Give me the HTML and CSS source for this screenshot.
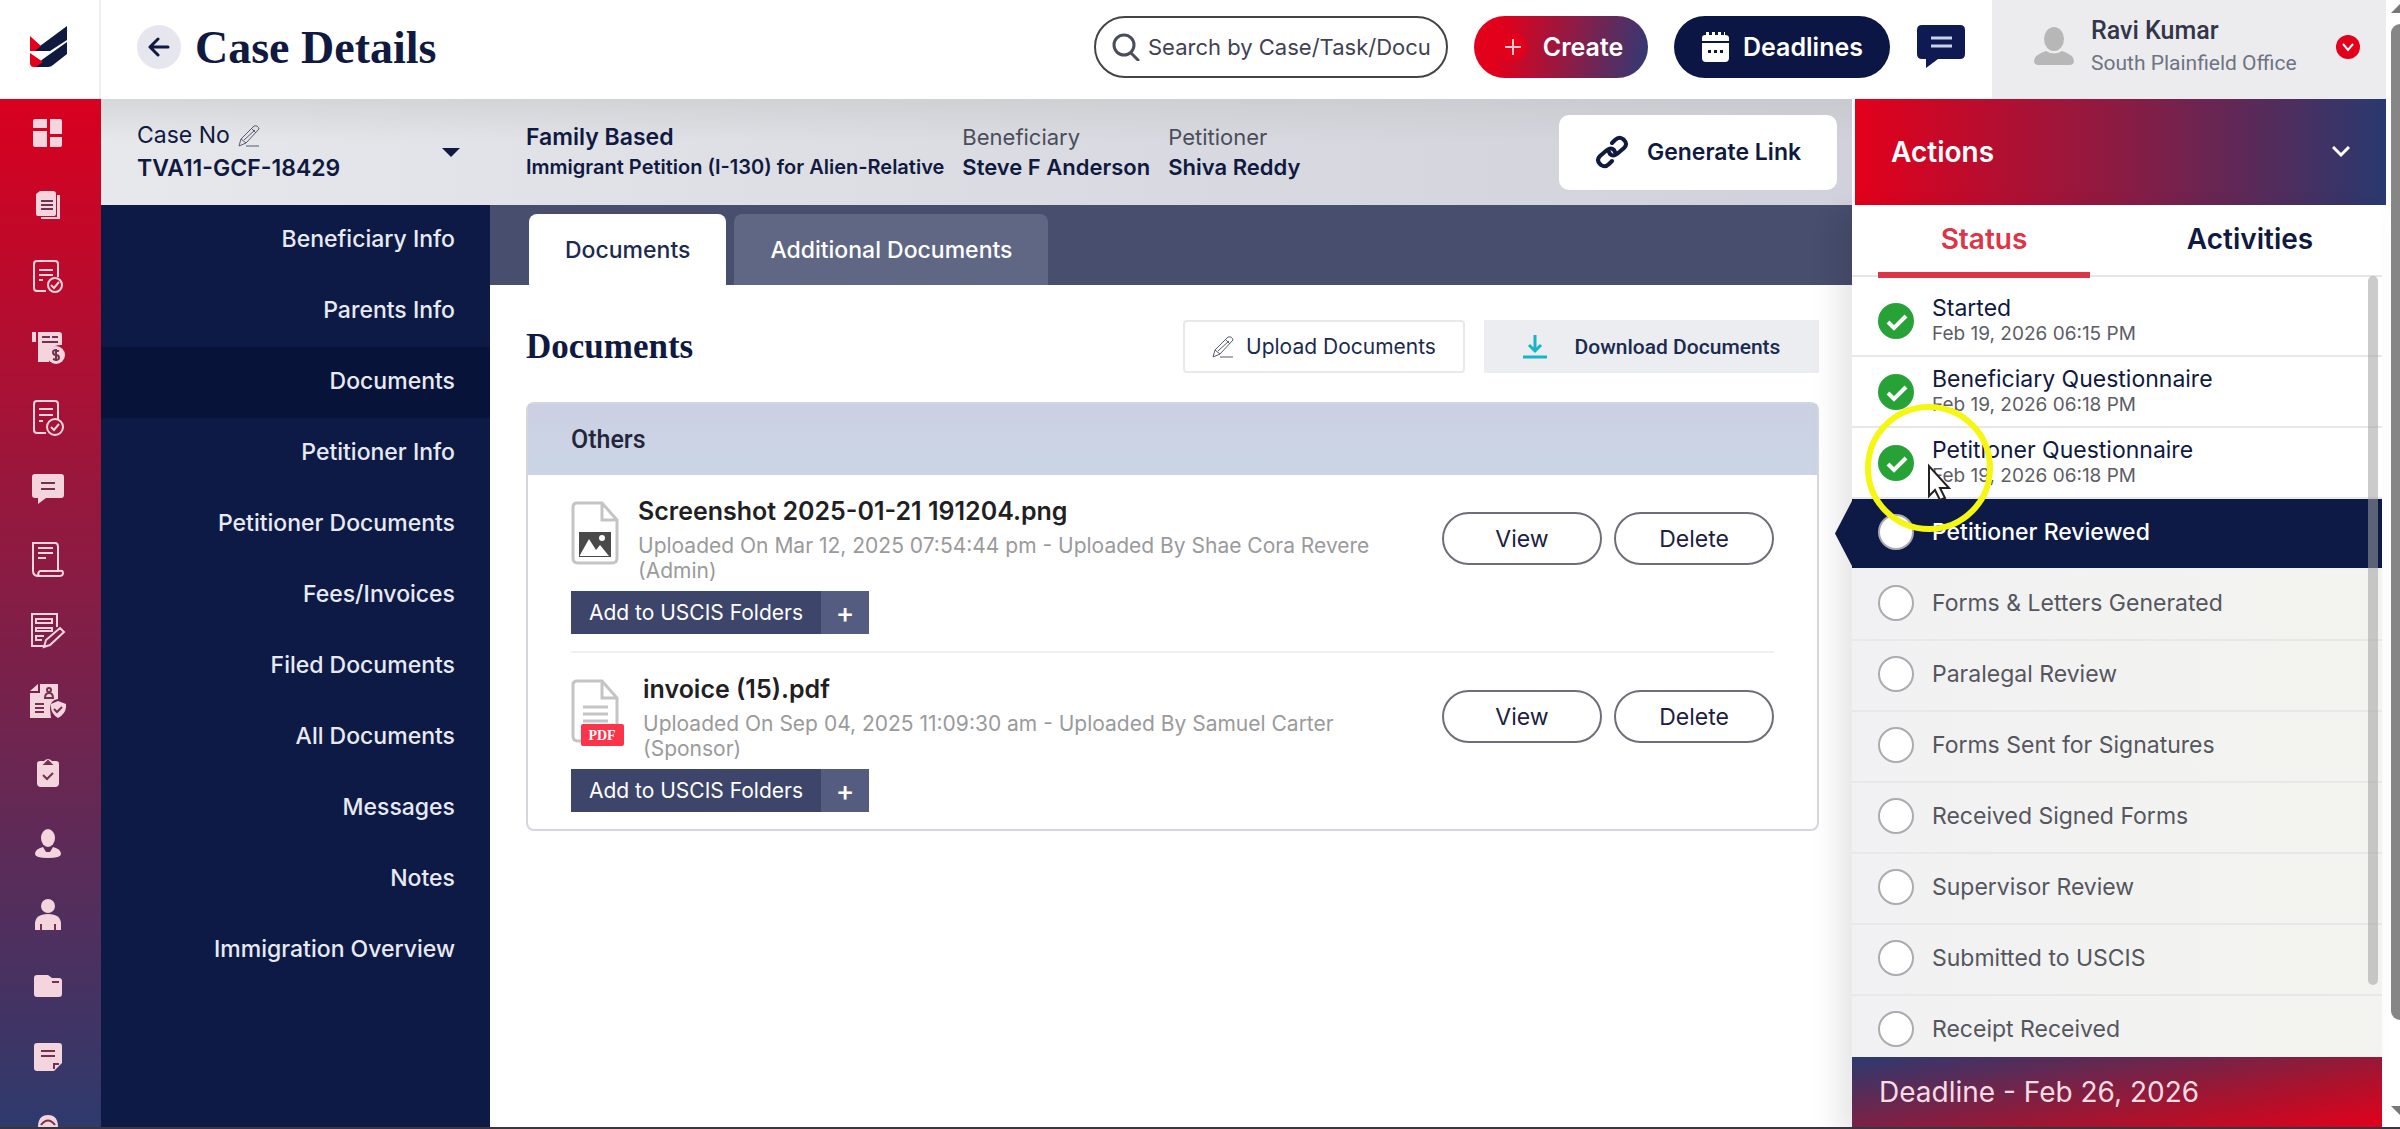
FILE: index.html
```html
<!DOCTYPE html>
<html lang="en">
<head>
    <meta charset="utf-8">
    <title>Case Details</title>
    <link rel="stylesheet" href="styles.css">
</head>
<body>
    <div class="app">
        <!-- top bar -->
        <header class="topbar">
            <a class="logo" href="#" aria-label="Home">
                <svg width="38" height="42" viewBox="0 0 38 42">
                    <path fill="#10193f" d="M10 20L37 0v14L20 25H3zM13 33L37 16v12L23 39q-2 2-5 2H4z"/>
                    <path fill="#e3001b" d="M0 10l11 10-6 5H0zM0 27l13 9-7 5H4q-4 0-4-4z"/>
                </svg>
            </a>
            <button class="back" aria-label="Back">
                <svg width="22" height="20" viewBox="0 0 22 20" fill="none" stroke="#10193f" stroke-width="3" stroke-linecap="round" stroke-linejoin="round"><path d="M20 10H2M10 2l-8 8 8 8"/></svg>
            </button>
            <h1>Case Details</h1>
            <label class="search">
                <svg width="28" height="28" viewBox="0 0 28 28" fill="none" stroke="#4a4d5c" stroke-width="3" stroke-linecap="round"><circle cx="12" cy="12" r="10"/><path d="M19 20l7 7"/></svg>
                <input type="text" aria-label="Search" placeholder="Search by Case/Task/Document">
            </label>
            <button class="pill create">
                <svg width="28" height="28" viewBox="0 0 28 28"><circle cx="14" cy="14" r="14" fill="#e3001b"/><path d="M14 6v16M6 14h16" stroke="#ffc9cf" stroke-width="2"/></svg>
                Create
            </button>
            <button class="pill deadlines">
                <svg width="28" height="30" viewBox="0 0 28 30" fill="#fff"><path d="M1 9V6q0-3 3-3h1V0h3v3h3V0h3v3h3V0h3v3h3V0h1v3q4 0 4 3v3z"/><path fill-rule="evenodd" d="M1 11h27v15q0 4-4 4H5q-4 0-4-4zm6 7v3h3v-3zm6 0v3h3v-3zm6 0v3h3v-3z"/></svg>
                Deadlines
            </button>
            <button class="chat" aria-label="Messages">
                <svg width="48" height="44" viewBox="0 0 48 44"><path fill="#0f1a52" d="M5 0h38q5 0 5 5v24q0 5-5 5H21L9 43v-9H5q-5 0-5-5V5q0-5 5-5z"/><path stroke="#c9d4ec" stroke-width="3" d="M14 13h21M14 21h21"/></svg>
            </button>
            <div class="user">
                <svg class="avatar" width="40" height="40" viewBox="0 0 40 40" fill="#b7b7b7"><ellipse cx="20" cy="12" rx="10" ry="12"/><path d="M0 34q0-6 12-10 8 5 16 0 12 4 12 10 0 4-5 4H5q-5 0-5-4z"/></svg>
                <div class="who">
                    <strong>Ravi Kumar</strong>
                    <span>South Plainfield Office</span>
                </div>
                <button class="user-more" aria-label="Account menu">
                    <svg width="24" height="24" viewBox="0 0 24 24"><circle cx="12" cy="12" r="12" fill="#e3001b"/><path d="M7 9l5 6 5-6" fill="none" stroke="#fff" stroke-width="2"/></svg>
                </button>
            </div>
        </header>

        <div class="body">
            <!-- icon rail -->
            <nav class="rail" aria-label="Main">
                <a href="#" aria-label="Dashboard"><svg width="32" height="32" viewBox="0 0 32 32" fill="currentColor"><path d="M3 1h12v9H1V3q0-2 2-2zM18 1h10q2 0 2 2v13H18zM1 13h14v16H3q-2 0-2-2zM18 19h12v8q0 2-2 2H18z"/></svg></a>
                <a href="#" aria-label="Cases"><svg width="32" height="32" viewBox="0 0 32 32"><path fill="currentColor" d="M4 9V5l4-3h13q3 0 3 3v20q0 2-2 2H6q-2 0-2-2zM25 6h3v24H9v-2h16z"/><path class="cut" d="M9 12h12M9 16h12M9 20h12"/></svg></a>
                <a href="#" aria-label="Approvals"><svg width="32" height="36" viewBox="0 0 32 36" fill="none" stroke="currentColor" stroke-width="2"><path d="M14 33H5q-3 0-3-3V6q0-3 3-3h18q3 0 3 3v13M7 12h14M7 17h14M7 22h4"/><circle cx="23" cy="27" r="7"/><path d="M19 27l3 3 5-6"/></svg></a>
                <a href="#" aria-label="Billing"><svg width="34" height="34" viewBox="0 0 34 34"><path fill="currentColor" d="M1 2h4v10H1zM7 2h21q3 0 3 3v10q-14-1-13 17H7z"/><circle cx="25" cy="25" r="9" fill="currentColor"/><path class="cut" d="M11 7h8M21 7h6M11 12h16"/><path class="cut" d="M28 21q-6-2-6 1t3 3 3 3-6 1M25 19v12"/></svg></a>
                <a href="#" aria-label="Tasks"><svg width="32" height="36" viewBox="0 0 32 36" fill="none" stroke="currentColor" stroke-width="2"><path d="M14 33H5q-3 0-3-3V4q0-3 3-3h18q3 0 3 3v15M7 9h14M7 15h14M7 21h4"/><circle cx="23" cy="27" r="8"/><path d="M19 27l3 3 5-6"/></svg></a>
                <a href="#" aria-label="Chat"><svg width="32" height="30" viewBox="0 0 32 30"><path fill="currentColor" d="M3 0h26q3 0 3 3v18q0 3-3 3H14l-8 6v-6H3q-3 0-3-3V3q0-3 3-3z"/><path class="cut" d="M9 9h14M9 15h14"/></svg></a>
                <a href="#" aria-label="Forms"><svg width="32" height="36" viewBox="0 0 32 36" fill="none" stroke="currentColor" stroke-width="2"><path d="M7 34q-6 0-6-5V1h22q3 0 3 4v23M7 34h20q4 0 4-3t-4-2H8q-3 2-1 5zM6 6h15M6 11h15M6 16h8"/></svg></a>
                <a href="#" aria-label="Edit forms"><svg width="36" height="36" viewBox="0 0 36 36" fill="none" stroke="currentColor" stroke-width="2"><path d="M14 33H2V1h25v13M6 6h16v4H6zM6 15h16v3H6zM14 23H6v4h6M14 34l2-7 14-12 4 4-14 13z"/></svg></a>
                <a href="#" aria-label="Secure records"><svg width="36" height="36" viewBox="0 0 36 36"><path fill="currentColor" d="M10 0h18v15q-8 1-8 10l1 9H0V9h10z"/><path fill="currentColor" d="M0 7l8-7v7zM28 17l8 3q1 9-8 14-8-5-7-14z"/><path class="cut" d="M5 20h9M5 24h9M5 28h9M24 25l3 3 5-5M15 14q0-5 4-5t4 5z"/><circle class="cut" cx="19" cy="6" r="2"/></svg></a>
                <a href="#" aria-label="Checklist"><svg width="24" height="28" viewBox="0 0 24 28"><path fill="currentColor" d="M4 2h4q4-4 8 0h4q3 0 3 3v19q0 4-4 4H5q-4 0-4-4V5q0-3 3-3z"/><path class="cut" d="M9 5h6l-3-3zM7 16l4 4 6-6"/></svg></a>
                <a href="#" aria-label="Attorneys"><svg width="28" height="30" viewBox="0 0 28 30" fill="currentColor"><ellipse cx="14" cy="9" rx="7" ry="9"/><path d="M9 18l3 5h4l3-5q8 2 8 7 0 4-13 4T1 25q0-5 8-7z"/></svg></a>
                <a href="#" aria-label="Clients"><svg width="28" height="32" viewBox="0 0 28 32"><circle cx="14" cy="7" r="7" fill="currentColor"/><path fill="currentColor" d="M1 31v-6q0-10 13-10t13 10v6z"/><path class="cut" d="M7 32v-7M21 32v-7"/></svg></a>
                <a href="#" aria-label="Folders"><svg width="28" height="24" viewBox="0 0 28 24"><path fill="currentColor" d="M3 1h11l4 3h7q3 0 3 3v13q0 3-3 3H3q-3 0-3-3V4q0-3 3-3z"/><path class="cut" d="M18 8h7"/></svg></a>
                <a href="#" aria-label="Notes"><svg width="28" height="28" viewBox="0 0 28 28"><path fill="currentColor" d="M3 0h22q3 0 3 3v17l-8 8H3q-3 0-3-3V3q0-3 3-3z"/><path class="cut" d="M7 8h14M7 13h14M20 26v-5h5"/></svg></a>
                <a href="#" aria-label="Support"><svg width="22" height="28" viewBox="0 0 22 28"><path fill="currentColor" d="M1 28V13Q1 1 11 1t10 12v15z"/><path class="cut" d="M4 11q7-9 14 0"/></svg></a>
            </nav>

            <div class="work">
                <!-- case summary -->
                <section class="casebar">
                    <div class="case-pick">
                        <label for="case">Case No
                            <svg width="22" height="22" viewBox="0 0 22 22" fill="none" stroke="#555b70" stroke-width="1"><path d="M1 21l2-7L16 1q4-1 5 3L8 18zM3 14l5 4M14 4l4 4M6 15L17 5M8 21h13"/></svg>
                        </label>
                        <select id="case"><option>TVA11-GCF-18429</option></select>
                        <svg class="caret" width="18" height="9" viewBox="0 0 18 9"><path fill="#10193f" d="M0 0h18L9 9z"/></svg>
                    </div>
                    <dl class="facts">
                        <div class="kind"><dt>Family Based</dt><dd>Immigrant Petition (I-130) for Alien-Relative</dd></div>
                        <div><dt>Beneficiary</dt><dd>Steve F Anderson</dd></div>
                        <div><dt>Petitioner</dt><dd>Shiva Reddy</dd></div>
                    </dl>
                    <button class="generate">
                        <svg width="34" height="34" viewBox="0 0 34 34" fill="none" stroke="#10193f" stroke-width="4" stroke-linecap="round"><path d="M17 8l3-3q4-4 8-1l1 1q4 4 0 8l-7 6q-4 3-7 0l-1-2"/><path d="M17 26l-3 3q-4 4-8 1l-1-1q-4-4 0-8l7-6q4-3 7 0l1 2"/></svg>
                        Generate Link
                    </button>
                </section>

                <div class="columns">
                    <nav class="menu" aria-label="Case">
                        <a href="#">Beneficiary Info</a>
                        <a href="#">Parents Info</a>
                        <a class="active" href="#">Documents</a>
                        <a href="#">Petitioner Info</a>
                        <a href="#">Petitioner Documents</a>
                        <a href="#">Fees/Invoices</a>
                        <a href="#">Filed Documents</a>
                        <a href="#">All Documents</a>
                        <a href="#">Messages</a>
                        <a href="#">Notes</a>
                        <a href="#">Immigration Overview</a>
                    </nav>

                    <main class="content">
                        <div class="tabs">
                            <button class="tab active">Documents</button>
                            <button class="tab">Additional Documents</button>
                        </div>
                        <div class="docs">
                            <div class="docs-head">
                                <h2>Documents</h2>
                                <button class="upload">
                                    <svg width="22" height="22" viewBox="0 0 22 22" fill="none" stroke="#555b70" stroke-width="1"><path d="M1 21l2-7L16 1q4-1 5 3L8 18zM3 14l5 4M14 4l4 4M6 15L17 5M8 21h13"/></svg>
                                    Upload Documents
                                </button>
                                <button class="download">
                                    <svg width="24" height="24" viewBox="0 0 24 24" fill="none" stroke="#16b5c8" stroke-width="3"><path d="M12 0v15M6 10l6 6 6-6M0 22h24"/></svg>
                                    Download Documents
                                </button>
                            </div>
                            <section class="card">
                                <h3>Others</h3>
                                <article class="file">
                                    <div class="file-info">
                                        <svg class="file-icon" width="48" height="64" viewBox="0 0 48 64"><path fill="#fff" stroke="#c4c4c4" stroke-width="3" d="M6 2h25l15 17v38q0 5-5 5H7q-5 0-5-5V6q0-4 4-4zM31 2v17h15"/><path fill="#4a4a4a" d="M8 31h32v25H8z"/><path fill="#fff" d="M9 54l9-16 7 11 4-5 9 11H9z"/><circle cx="31" cy="37" r="3" fill="#fff"/></svg>
                                        <div class="file-text">
                                            <h4>Screenshot 2025-01-21 191204.png</h4>
                                            <p>Uploaded On Mar 12, 2025 07:54:44 pm - Uploaded By Shae Cora Revere (Admin)</p>
                                        </div>
                                    </div>
                                    <div class="file-actions">
                                        <button>View</button>
                                        <button>Delete</button>
                                    </div>
                                    <button class="add"><span>Add to USCIS Folders</span><b>+</b></button>
                                </article>
                                <article class="file">
                                    <div class="file-info">
                                        <svg class="file-icon" width="53" height="67" viewBox="0 0 53 67"><path fill="#fff" stroke="#c4c4c4" stroke-width="3" d="M6 2h25l15 17v38q0 5-5 5H7q-5 0-5-5V6q0-4 4-4zM31 2v17h15"/><path stroke="#c4c4c4" stroke-width="3" d="M12 28h25M12 35h25M12 42h25"/><rect x="10" y="45" width="43" height="22" rx="2" fill="#fb3449"/><text class="pdf" x="31" y="61" text-anchor="middle">PDF</text></svg>
                                        <div class="file-text">
                                            <h4>invoice (15).pdf</h4>
                                            <p>Uploaded On Sep 04, 2025 11:09:30 am - Uploaded By Samuel Carter (Sponsor)</p>
                                        </div>
                                    </div>
                                    <div class="file-actions">
                                        <button>View</button>
                                        <button>Delete</button>
                                    </div>
                                    <button class="add"><span>Add to USCIS Folders</span><b>+</b></button>
                                </article>
                            </section>
                        </div>
                    </main>
                </div>
            </div>

            <!-- status panel -->
            <aside class="panel">
                <button class="actions">
                    Actions
                    <svg width="18" height="12" viewBox="0 0 18 12" fill="none" stroke="#fff" stroke-width="3"><path d="M1 1l8 8 8-8"/></svg>
                </button>
                <div class="panel-body">
                    <div class="panel-tabs">
                        <button class="active">Status</button>
                        <button>Activities</button>
                    </div>
                    <ol class="steps">
                        <li class="done"><svg class="dot" viewBox="0 0 36 36"><circle cx="18" cy="18" r="18" fill="#27a236"/><path d="M10 19l6 6 12-12" fill="none" stroke="#fff" stroke-width="4"/></svg><div>Started<time>Feb 19, 2026 06:15 PM</time></div></li>
                        <li class="done"><svg class="dot" viewBox="0 0 36 36"><circle cx="18" cy="18" r="18" fill="#27a236"/><path d="M10 19l6 6 12-12" fill="none" stroke="#fff" stroke-width="4"/></svg><div>Beneficiary Questionnaire<time>Feb 19, 2026 06:18 PM</time></div></li>
                        <li class="done"><svg class="dot" viewBox="0 0 36 36"><circle cx="18" cy="18" r="18" fill="#27a236"/><path d="M10 19l6 6 12-12" fill="none" stroke="#fff" stroke-width="4"/></svg><div>Petitioner Questionnaire<time>Feb 19, 2026 06:18 PM</time></div></li>
                        <li class="current"><i class="dot"></i><div>Petitioner Reviewed</div></li>
                        <li><i class="dot"></i><div>Forms &amp; Letters Generated</div></li>
                        <li><i class="dot"></i><div>Paralegal Review</div></li>
                        <li><i class="dot"></i><div>Forms Sent for Signatures</div></li>
                        <li><i class="dot"></i><div>Received Signed Forms</div></li>
                        <li><i class="dot"></i><div>Supervisor Review</div></li>
                        <li><i class="dot"></i><div>Submitted to USCIS</div></li>
                        <li><i class="dot"></i><div>Receipt Received</div></li>
                    </ol>
                    <div class="due">Deadline - Feb 26, 2026</div>
                    <div class="thumb"></div>
                    <svg class="pointer" width="128" height="128" viewBox="0 0 128 128"><circle cx="64" cy="64" r="61" fill="none" stroke="#f6f613" stroke-width="6"/><path fill="#fff" stroke="#222" stroke-width="2" d="M64 62v30l6-6 5 10 5-2-5-10h9z"/></svg>
                </div>
            </aside>
        </div>
    </div>
    <div class="scroll">
        <svg width="18" height="9" viewBox="0 0 18 9"><path fill="#777" d="M0 9h18L9 0z"/></svg>
        <div class="scroll-track"><div class="scroll-thumb"></div></div>
        <svg width="18" height="9" viewBox="0 0 18 9"><path fill="#777" d="M0 0h18L9 9z"/></svg>
    </div>
</body>
</html>
```
FILE: styles.css
```css
* {
    box-sizing: border-box;
}
body {
    margin: 0;
    height: 100vh;
    display: flex;
    overflow: hidden;
    background: #fff;
    color: #10193f;
    font-family: Inter, "Liberation Sans", sans-serif;
    font-size: 23px;
    border-bottom: 2px solid #3a3340;
}
button, input, select {
    font: inherit;
    color: inherit;
    border: 0;
    padding: 0;
    background: none;
}
a {
    color: inherit;
    text-decoration: none;
}
svg {
    display: block;
    flex: none;
}
h1, h2, h3, h4, p, dl, dd, ol {
    margin: 0;
    padding: 0;
}
.app {
    flex: 1;
    min-width: 0;
    display: flex;
    flex-direction: column;
}

/* top bar */
.topbar {
    flex: none;
    height: 99px;
    display: flex;
    align-items: center;
    padding-bottom: 5px;
}
.logo {
    width: 101px;
    height: 99px;
    margin-bottom: -5px;
    padding: 0 0 5px 30px;
    display: flex;
    align-items: center;
    border-right: 2px solid #efeff1;
}
.back {
    width: 44px;
    height: 44px;
    margin: 0 14px 0 36px;
    display: flex;
    align-items: center;
    justify-content: center;
    border-radius: 50%;
    background: #e6e6ee;
}
h1, h2 {
    font-family: "Liberation Serif", serif;
    font-weight: bold;
    flex: 1;
}
h1 {
    font-size: 46px;
}
.search {
    width: 354px;
    height: 62px;
    display: flex;
    align-items: center;
    gap: 8px;
    padding: 0 16px;
    border: 2px solid #444;
    border-radius: 31px;
}
.search input {
    flex: 1;
    min-width: 0;
    font-size: 22px;
    outline: 0;
}
.search input::placeholder {
    color: #3f4252;
    opacity: 1;
}
.pill {
    height: 62px;
    display: flex;
    align-items: center;
    justify-content: center;
    gap: 14px;
    border-radius: 31px;
    color: #fff;
    font-size: 25px;
    font-weight: 600;
}
.create {
    width: 174px;
    margin: 0 26px;
    gap: 16px;
    background: linear-gradient(100deg, #e3001b 15%, #2f3a75);
}
.deadlines {
    width: 216px;
    background: #0c1644;
}
.chat {
    margin: 0 27px;
}
.user {
    width: 394px;
    height: 99px;
    margin-bottom: -5px;
    padding: 0 26px 5px 42px;
    display: flex;
    align-items: center;
    background: #ececee;
}
.who {
    flex: 1;
    margin-left: 17px;
    font-family: Roboto, sans-serif;
    line-height: 32px;
}
.who strong, .who span {
    display: block;
}
.who strong {
    font-size: 25px;
    font-weight: 500;
    color: #33364a;
}
.who span {
    font-size: 21px;
    color: #6f7383;
}

/* icon rail */
.body {
    flex: 1;
    min-height: 0;
    display: flex;
}
.rail {
    width: 101px;
    overflow: hidden;
    background: linear-gradient(#d9001f, #8c1b42 45%, #2f3a6d);
}
.rail a {
    height: 71px;
    padding: 0 5px 2px 0;
    display: flex;
    align-items: center;
    justify-content: center;
    color: #f4d5de;
}
.cut {
    fill: none;
    stroke: #74304f;
    stroke-width: 2px;
}

/* case summary */
.work {
    flex: 1;
    min-width: 0;
    display: flex;
    flex-direction: column;
}
.casebar {
    flex: none;
    height: 106px;
    display: flex;
    align-items: center;
    padding: 0 15px 0 36px;
    background: linear-gradient(rgba(190, 190, 190, .4), rgba(190, 190, 190, 0) 40%), linear-gradient(90deg, #e6e8ec, #d0d1da);
}
.case-pick {
    width: 389px;
    padding-right: 66px;
    display: grid;
    grid-template-columns: 1fr auto;
    align-items: center;
    line-height: 33px;
}
.case-pick label {
    display: flex;
    align-items: center;
    gap: 8px;
}
.case-pick select {
    grid-row: 2;
    height: 33px;
    appearance: none;
    font-weight: 600;
}
.caret {
    grid-area: 1 / 2 / 3;
}
.facts {
    flex: 1;
    display: flex;
    gap: 18px;
    line-height: 30px;
}
.facts dt {
    font-size: 22px;
    color: #4b4d5a;
}
.facts dd {
    font-size: 22px;
    font-weight: 600;
}
.facts .kind dt {
    font-size: 23px;
    color: #10193f;
    font-weight: 600;
}
.facts .kind dd {
    font-size: 20px;
}
.generate {
    width: 278px;
    height: 75px;
    display: flex;
    align-items: center;
    justify-content: center;
    gap: 18px;
    background: #fff;
    border-radius: 10px;
    font-weight: 600;
}

/* case menu */
.columns {
    flex: 1;
    display: flex;
}
.menu {
    width: 389px;
    background: #0d1a45;
}
.menu a {
    height: 71px;
    padding: 0 35px 4px 0;
    display: flex;
    align-items: center;
    justify-content: flex-end;
    color: #e8eaf3;
    font-weight: 500;
}
.menu .active {
    background: #08133a;
}

/* documents */
.content {
    flex: 1;
    min-width: 0;
}
.tabs {
    height: 80px;
    padding: 9px 39px 0;
    display: flex;
    gap: 8px;
    background: #474e6e;
}
.tab {
    padding: 0 36px;
    border-radius: 8px 8px 0 0;
    background: #606784;
    color: #fff;
    font-weight: 500;
}
.tab.active {
    background: #fff;
    color: #1b2a4f;
}
.docs {
    padding: 35px 33px 0 36px;
}
.docs-head {
    display: flex;
    align-items: center;
    height: 53px;
    margin-bottom: 29px;
}
h2 {
    font-size: 35px;
}
.upload, .download {
    height: 53px;
    display: flex;
    align-items: center;
    justify-content: center;
    color: #1b2a4f;
    font-size: 21px;
}
.upload {
    width: 282px;
    margin-right: 19px;
    gap: 12px;
    border: 2px solid #e8e9ed;
    border-radius: 4px;
}
.download {
    width: 335px;
    gap: 28px;
    background: #ebedf0;
    font-family: Roboto, sans-serif;
    font-weight: 500;
}
.card {
    border: 2px solid #d4d7de;
    border-radius: 8px;
    padding-bottom: 17px;
}
h3 {
    height: 71px;
    padding: 0 43px;
    display: flex;
    align-items: center;
    background: linear-gradient(#cbd0e2, #cbd5e6);
    color: #23263a;
    font-family: Roboto, sans-serif;
    font-size: 25px;
    font-weight: 500;
}
.file {
    margin: 0 43px;
    padding-top: 22px;
    display: grid;
    grid-template-columns: 1fr auto;
    row-gap: 8px;
}
.file + .file {
    margin-top: 17px;
    border-top: 2px solid #f0f0f2;
}
.file-info {
    display: flex;
    gap: 19px;
    max-width: 810px;
}
.file-icon {
    margin-top: 4px;
}
.file-info h4 {
    margin-bottom: 7px;
    font-size: 25px;
    line-height: 29px;
    font-weight: 600;
    color: #1f1f24;
}
.file-info p {
    font-size: 21px;
    line-height: 25px;
    color: #9a9a9c;
}
.file-actions {
    display: flex;
    gap: 12px;
    padding-top: 15px;
}
.file-actions button {
    width: 160px;
    height: 53px;
    border: 2px solid #6d6f78;
    border-radius: 27px;
    color: #1c2142;
}
.add {
    justify-self: start;
    display: flex;
    height: 43px;
    color: #fff;
    background: #3d456b;
    font-size: 21px;
}
.add span, .add b {
    display: flex;
    align-items: center;
    justify-content: center;
    height: 43px;
}
.add span {
    width: 250px;
}
.add b {
    width: 48px;
    background: #545d80;
    font-size: 28px;
    font-weight: 500;
}
.pdf {
    font: bold 14px "Liberation Serif", serif;
    fill: #fff;
}

/* status panel */
.panel {
    width: 534px;
    display: flex;
    flex-direction: column;
    z-index: 1;
}
.actions {
    height: 106px;
    margin-left: 3px;
    padding: 0 36px;
    display: flex;
    align-items: center;
    justify-content: space-between;
    background: linear-gradient(90deg, #e3001b, #8b1b43 50%, #29396f);
    color: #fff;
    font-size: 28px;
    font-weight: 600;
}
.panel-body {
    flex: 1;
    min-height: 0;
    margin-right: 4px;
    display: flex;
    flex-direction: column;
    position: relative;
    background: #fff;
    box-shadow: -14px 10px 26px rgba(0, 0, 0, .1);
}
.panel-tabs {
    flex: none;
    height: 72px;
    padding: 0 0 0 26px;
    display: flex;
    border-bottom: 2px solid #e6e6ea;
}
.panel-tabs button {
    width: 212px;
    height: 73px;
    margin-right: 54px;
    font-size: 28px;
    font-weight: 600;
    border-bottom: 6px solid transparent;
}
.panel-tabs button:last-child {
    margin-right: 0;
}
.panel-tabs .active {
    color: #de3448;
    border-color: #de3448;
}
.steps {
    flex: 1;
    min-height: 0;
    padding-top: 9px;
    list-style: none;
}
.steps li {
    height: 71px;
    padding: 0 0 4px 26px;
    display: flex;
    align-items: center;
    gap: 18px;
    position: relative;
    background: linear-gradient(90deg, #f1f1f3, #f3f4ef);
    border-bottom: 2px solid #e8e8e9;
    color: #55565e;
}
.steps .done {
    padding-bottom: 0;
    background: #fff;
    color: #10193f;
    line-height: 26px;
}
.steps time {
    display: block;
    font-size: 19px;
    color: #5c5d66;
}
.steps .current {
    background: #0d1a45;
    border-color: #f1f1f3;
    color: #fff;
    font-weight: 500;
}
.current::before {
    content: "";
    position: absolute;
    top: 0;
    left: -17px;
    width: 18px;
    height: 69px;
    background: #0d1a45;
    clip-path: polygon(100% 0, 100% 100%, 0 50%);
}
.dot {
    flex: none;
    width: 36px;
    height: 36px;
}
i.dot {
    border: 2px solid #ababb0;
    border-radius: 50%;
    background: #fff;
}
.due {
    flex: none;
    height: 70px;
    padding-left: 27px;
    display: flex;
    align-items: center;
    position: relative;
    background: linear-gradient(170deg, #2b3a70, #a5142f 65%, #e3001b);
    color: #f8dce4;
    font-size: 28px;
}
.thumb {
    position: absolute;
    top: 71px;
    right: 4px;
    width: 10px;
    height: 709px;
    border-radius: 5px;
    background: rgba(160, 160, 160, .55);
}
.pointer {
    position: absolute;
    left: 13px;
    top: 199px;
}

/* page scrollbar */
.scroll {
    flex: none;
    width: 14px;
    padding: 4px 0 12px 5px;
    display: flex;
    flex-direction: column;
    gap: 11px;
    overflow: hidden;
}
.scroll-track {
    flex: 1;
    width: 18px;
}
.scroll-thumb {
    height: 93%;
    border-radius: 9px;
    background: #868686;
}
```
